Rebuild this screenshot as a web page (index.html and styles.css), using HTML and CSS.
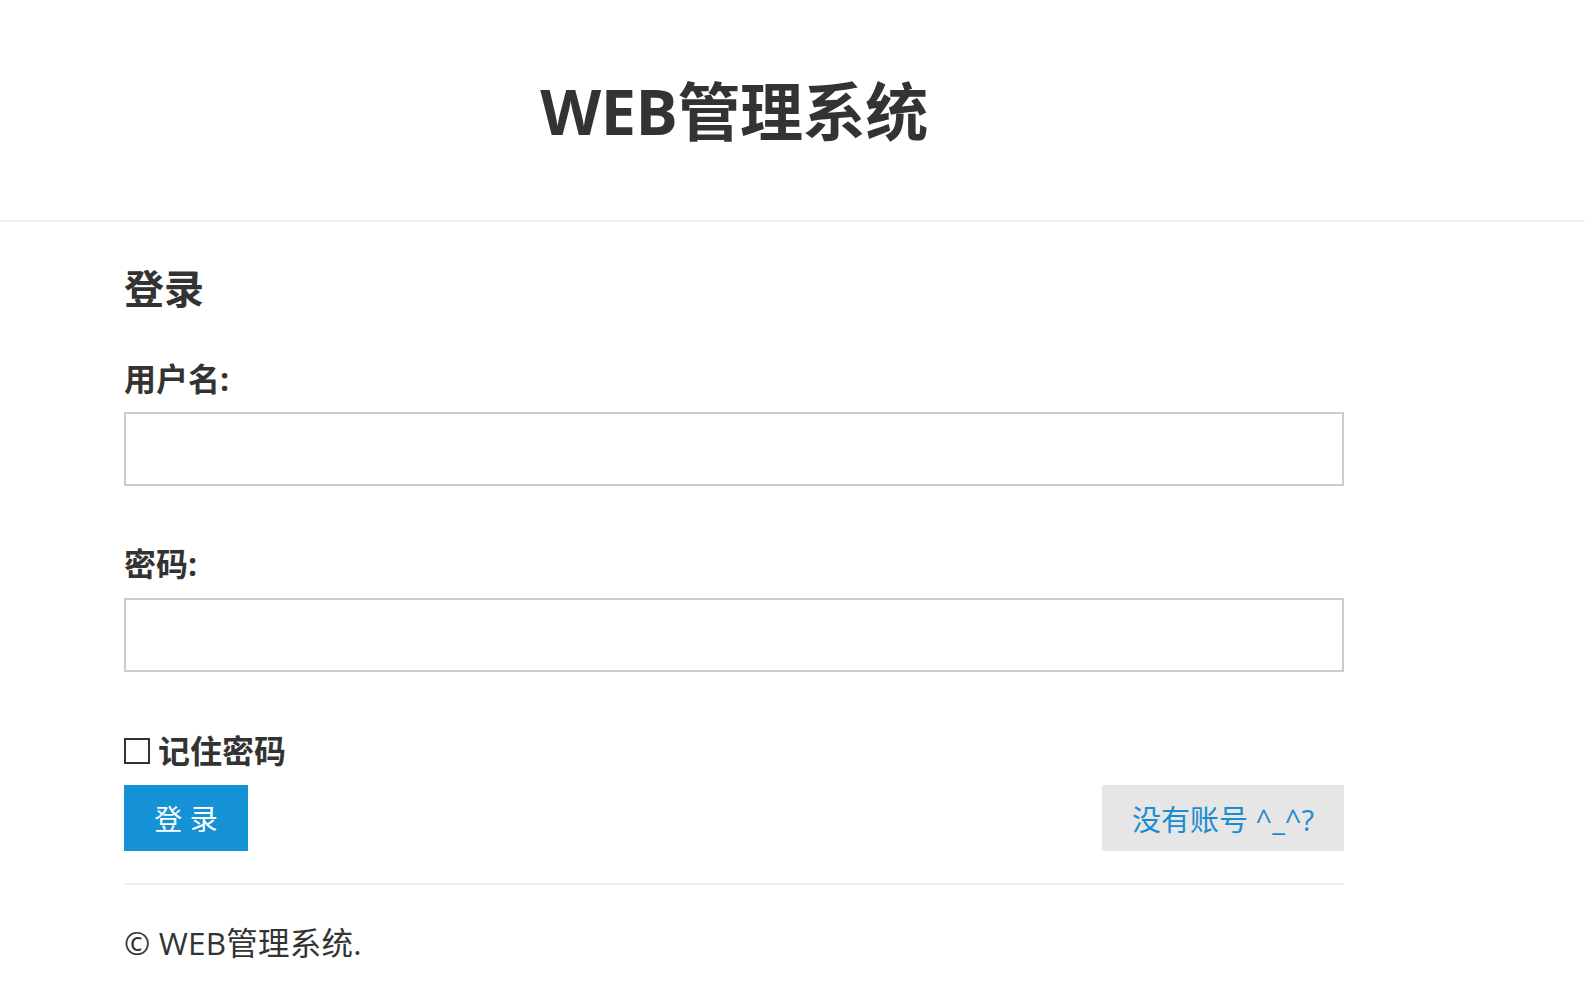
FILE: index.html
```html
<!DOCTYPE html>
<html lang="zh-CN">
<head>
<meta charset="utf-8">
<title>WEB管理系统</title>
<link rel="stylesheet" href="styles.css">
</head>
<body>
<header class="site-header">
  <div class="header-inner">
    <h1 class="site-title">WEB管理系统</h1>
  </div>
</header>
<main class="content">
  <h2 class="form-title">登录</h2>
  <form class="login-form">
    <label class="field-label" for="username">用户名:</label>
    <input class="field-input" id="username" type="text">
    <label class="field-label pw-label" for="password">密码:</label>
    <input class="field-input" id="password" type="password">
    <label class="remember">
      <span class="check-box"></span>
      <span class="remember-text">记住密码</span>
    </label>
    <div class="actions">
      <button type="button" class="btn-primary">登 录</button>
      <button type="button" class="btn-secondary">没有账号 ^_^?</button>
    </div>
  </form>
  <footer class="site-footer">
    <p class="copyright">© WEB管理系统.</p>
  </footer>
</main>
</body>
</html>
```
FILE: styles.css
```css
* { box-sizing: border-box; }
html, body {
  margin: 0;
  padding: 0;
  background: #fff;
}
body {
  font-family: "Open Sans", "Noto Sans CJK SC", sans-serif;
  color: #333;
}
.site-header {
  height: 222px;
  border-bottom: 2px solid #eeeeee;
  padding-left: 124px;
}
.header-inner {
  width: 1220px;
  height: 220px;
  display: flex;
  align-items: center;
  justify-content: center;
}
.site-title {
  margin: 0;
  font-size: 63px;
  line-height: 1;
  font-weight: 700;
  letter-spacing: -0.4px;
  color: #333;
}
.content {
  padding-left: 124px;
  width: 1344px;
}
.form-title {
  margin: 46px 0 0;
  font-size: 40px;
  line-height: 42px;
  font-weight: 700;
}
.login-form {
  display: flex;
  flex-direction: column;
}
.field-label {
  margin-top: 52px;
  font-size: 32px;
  line-height: 34px;
  font-weight: 700;
}
.pw-label { margin-top: 61px; }
.field-input {
  margin-top: 16px;
  width: 1220px;
  height: 74px;
  border: 2px solid #cccccc;
  background: #fff;
  font-size: 28px;
  padding: 0 14px;
  outline: none;
}
#password { margin-top: 17px; }
.remember {
  margin-top: 62px;
  display: flex;
  align-items: center;
  gap: 8px;
}
.check-box {
  width: 26px;
  height: 26px;
  border: 2px solid #333;
  background: #fff;
}
.remember-text {
  font-size: 32px;
  line-height: 34px;
  font-weight: 700;
}
.actions {
  margin-top: 17px;
  width: 1220px;
  display: flex;
  justify-content: space-between;
}
.btn-primary,
.btn-secondary {
  height: 66px;
  border: 0;
  font-family: "Open Sans", "Noto Sans CJK SC", sans-serif;
  padding: 0;
  cursor: pointer;
}
.btn-primary {
  width: 124px;
  font-size: 28px;
  background: #1591d5;
  color: #fff;
}
.btn-secondary {
  width: 242px;
  font-size: 29px;
  background: #e6e6e6;
  color: #1a8dd0;
}
.site-footer {
  margin-top: 32px;
  width: 1220px;
  border-top: 2px solid #eeeeee;
}
.copyright {
  margin: 41px 0 0;
  font-size: 31.5px;
  line-height: 34px;
  letter-spacing: 0.2px;
  color: #333;
}
```
